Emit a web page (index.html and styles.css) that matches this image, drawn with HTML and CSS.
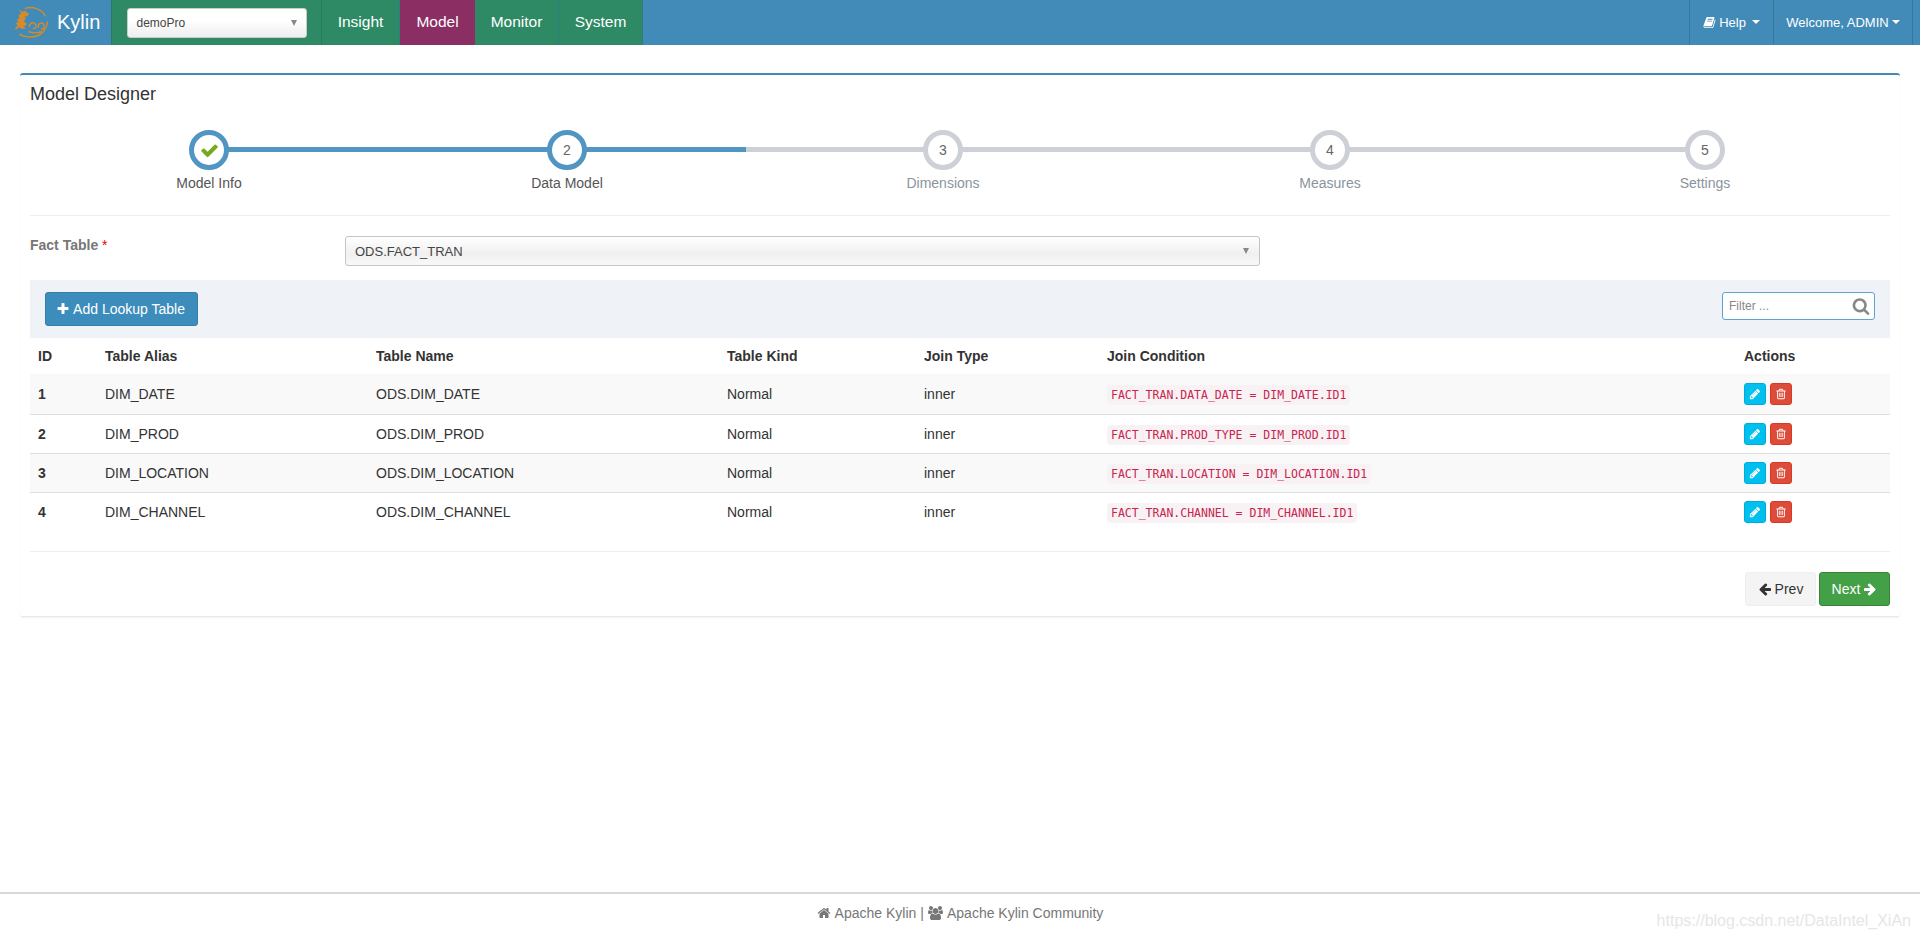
FILE: index.html
```html
<!DOCTYPE html>
<html lang="en">
<head>
<meta charset="utf-8">
<title>Kylin - Model Designer</title>
<link rel="stylesheet" href="styles.css">
</head>
<body>
<svg class="defs" aria-hidden="true">
  <symbol id="i-edit" viewBox="0 0 1792 1792"><path d="M491 1536l91-91-235-235-91 91v107h128v128h107zm523-928q0-22-22-22-10 0-17 7l-542 542q-7 7-7 17 0 22 22 22 10 0 17-7l542-542q7-7 7-17zm-54-192l416 416-832 832h-416v-416zm683 96q0 53-37 90l-166 166-416-416 166-165q36-38 90-38 53 0 91 38l235 234q37 39 37 91z"/></symbol>
  <symbol id="i-del" viewBox="0 0 1792 1792"><path d="M704 736v576q0 14-9 23t-23 9h-64q-14 0-23-9t-9-23v-576q0-14 9-23t23-9h64q14 0 23 9t9 23zm256 0v576q0 14-9 23t-23 9h-64q-14 0-23-9t-9-23v-576q0-14 9-23t23-9h64q14 0 23 9t9 23zm256 0v576q0 14-9 23t-23 9h-64q-14 0-23-9t-9-23v-576q0-14 9-23t23-9h64q14 0 23 9t9 23zm128 724v-948h-896v948q0 22 7 40.500t14.500 27 10.500 8.500h832q3 0 10.500-8.500t14.500-27 7-40.500zm-672-1076h448l-48-117q-7-9-17-11h-317q-10 2-17 11zm928 32v64q0 14-9 23t-23 9h-96v948q0 83-47 143.500t-113 60.500h-832q-66 0-113-58.500t-47-141.500v-952h-96q-14 0-23-9t-9-23v-64q0-14 9-23t23-9h309l70-167q15-37 54-63t79-26h320q40 0 79 26t54 63l70 167h309q14 0 23 9t9 23z"/></symbol>
</svg>
<div class="page">
  <header class="topbar">
    <a class="brand">
      <svg class="logo" viewBox="0 0 40 36">
        <path class="logo-arc" d="M12 2.500C20 -0.500 31 3 35 11M37 17C37 28 27 35 15 34C11 33.700 9 33 6 31"/>
        <path class="logo-body" d="M6 4l3 2 4-1 1 2 3 1-2 3-3 0 1 3-2 3 3 2 0 2-3 1 2 3-5 0-2-2-4 3-1-1 3-4-2-2 3-2-2-2 3-2-1-3 3-2-2-3z"/>
        <path class="logo-arc" d="M17 23c0-5 5-6 7-3s-1 6-3 4M27 24c-1-5 4-7 6-4s0 6-3 5M16 28c5 2 10 2 15 0"/>
      </svg>
      <span class="brand-name">Kylin</span>
    </a>
    <div class="project-cell">
      <div class="project-select"><span>demoPro</span><i class="caret-gray"></i></div>
    </div>
    <nav class="nav-main">
      <a class="nav-item nav-insight">Insight</a>
      <a class="nav-item nav-model">Model</a>
      <a class="nav-item nav-monitor">Monitor</a>
      <a class="nav-item nav-system">System</a>
    </nav>
    <div class="nav-right">
      <a class="nav-r nav-help">
        <svg class="ico ico-book" viewBox="0 0 1792 1792"><path d="M1703 478q40 57 18 129l-275 906q-19 64-76.500 107.500t-122.500 43.500h-923q-77 0-148.500-53.500t-99.500-131.500q-24-67-2-127 0-4 3-27t4-37q1-8-3-21.500t-3-19.500q2-11 8-21t16.500-23.500 16.500-23.500q23-38 45-91.500t30-91.500q3-10 .5-30t-.5-28q3-11 17-28t17-23q21-36 42-92t25-90q1-9-2.500-32t.5-28q4-13 22-30.500t22-22.500q19-26 42.500-84.500t27.500-96.500q1-8-3-25.500t-2-26.500q2-8 9-18t18-23 17-21q8-12 16.500-30.500t15-35 16-36 19.500-32 26.500-23.500 36-11.500 47.500 5.500l-1 3q38-9 51-9h761q74 0 114 56t18 130l-274 906q-36 119-71.500 153.500t-128.500 34.500h-869q-27 0-38 15-11 16-1 43 24 70 144 70h923q29 0 56-15.500t35-41.500l300-987q7-22 5-57 38 15 59 43zm-1064 2q-4 13 2 22.500t20 9.500h608q13 0 25.500-9.500t16.500-22.500l21-64q4-13-2-22.500t-20-9.500h-608q-13 0-25.500 9.500t-16.500 22.500zm-83 256q-4 13 2 22.500t20 9.500h608q13 0 25.500-9.500t16.500-22.500l21-64q4-13-2-22.500t-20-9.500h-608q-13 0-25.500 9.500t-16.500 22.500z"/></svg>
        Help<i class="caret-white"></i>
      </a>
      <a class="nav-r nav-user">Welcome, ADMIN<i class="caret-white"></i></a>
    </div>
  </header>

  <main class="main">
    <section class="box">
      <h1 class="box-title">Model Designer</h1>
      <ol class="wizard">
        <li class="step step-1 done">
          <span class="bubble"><svg class="ico-check" viewBox="0 0 1792 1792"><path d="M1671 566q0 40-28 68l-724 724-136 136q-28 28-68 28t-68-28l-136-136-362-362q-28-28-28-68t28-68l136-136q28-28 68-28t68 28l294 295 656-657q28-28 68-28t68 28l136 136q28 28 28 68z"/></svg></span>
          <span class="step-label">Model Info</span>
        </li>
        <li class="step step-2 done">
          <span class="bubble">2</span>
          <span class="step-label">Data Model</span>
        </li>
        <li class="step step-3">
          <span class="bubble">3</span>
          <span class="step-label">Dimensions</span>
        </li>
        <li class="step step-4">
          <span class="bubble">4</span>
          <span class="step-label">Measures</span>
        </li>
        <li class="step step-5">
          <span class="bubble">5</span>
          <span class="step-label">Settings</span>
        </li>
      </ol>

      <div class="fact-row">
        <label class="fact-label">Fact Table <span class="req">*</span></label>
        <div class="fact-select"><span>ODS.FACT_TRAN</span><i class="caret-gray"></i></div>
      </div>

      <div class="toolbar">
        <button class="btn-add" type="button">
          <svg class="ico ico-plus" viewBox="0 0 1792 1792"><path d="M1600 736v192q0 40-28 68t-68 28h-416v416q0 40-28 68t-68 28h-192q-40 0-68-28t-28-68v-416h-416q-40 0-68-28t-28-68v-192q0-40 28-68t68-28h416v-416q0-40 28-68t68-28h192q40 0 68 28t28 68v416h416q40 0 68 28t28 68z"/></svg>
          Add Lookup Table
        </button>
        <div class="filter">
          <span class="filter-text">Filter ...</span>
          <svg class="ico-search" viewBox="0 0 1792 1792"><path d="M1216 832q0-185-131.500-316.500t-316.500-131.500-316.500 131.500-131.500 316.500 131.500 316.500 316.500 131.500 316.500-131.500 131.500-316.500zm512 832q0 52-38 90t-90 38q-54 0-90-38l-343-342q-179 124-399 124-143 0-273.500-55.500t-225-150-150-225-55.500-273.500 55.500-273.500 150-225 225-150 273.500-55.500 273.500 55.500 225 150 150 225 55.500 273.500q0 220-124 399l343 343q37 37 37 90z"/></svg>
        </div>
      </div>

      <table class="lookup">
        <colgroup>
          <col class="c-id"><col class="c-alias"><col class="c-name"><col class="c-kind"><col class="c-type"><col class="c-cond"><col class="c-act">
        </colgroup>
        <thead>
          <tr><th>ID</th><th>Table Alias</th><th>Table Name</th><th>Table Kind</th><th>Join Type</th><th>Join Condition</th><th>Actions</th></tr>
        </thead>
        <tbody>
          <tr>
            <td class="num">1</td><td>DIM_DATE</td><td>ODS.DIM_DATE</td><td>Normal</td><td>inner</td>
            <td><code>FACT_TRAN.DATA_DATE = DIM_DATE.ID1</code></td>
            <td><div class="acts">
              <button class="act act-edit" type="button"><svg><use href="#i-edit"/></svg></button>
              <button class="act act-del" type="button"><svg><use href="#i-del"/></svg></button>
            </div></td>
          </tr>
          <tr>
            <td class="num">2</td><td>DIM_PROD</td><td>ODS.DIM_PROD</td><td>Normal</td><td>inner</td>
            <td><code>FACT_TRAN.PROD_TYPE = DIM_PROD.ID1</code></td>
            <td><div class="acts">
              <button class="act act-edit" type="button"><svg><use href="#i-edit"/></svg></button>
              <button class="act act-del" type="button"><svg><use href="#i-del"/></svg></button>
            </div></td>
          </tr>
          <tr>
            <td class="num">3</td><td>DIM_LOCATION</td><td>ODS.DIM_LOCATION</td><td>Normal</td><td>inner</td>
            <td><code>FACT_TRAN.LOCATION = DIM_LOCATION.ID1</code></td>
            <td><div class="acts">
              <button class="act act-edit" type="button"><svg><use href="#i-edit"/></svg></button>
              <button class="act act-del" type="button"><svg><use href="#i-del"/></svg></button>
            </div></td>
          </tr>
          <tr>
            <td class="num">4</td><td>DIM_CHANNEL</td><td>ODS.DIM_CHANNEL</td><td>Normal</td><td>inner</td>
            <td><code>FACT_TRAN.CHANNEL = DIM_CHANNEL.ID1</code></td>
            <td><div class="acts">
              <button class="act act-edit" type="button"><svg><use href="#i-edit"/></svg></button>
              <button class="act act-del" type="button"><svg><use href="#i-del"/></svg></button>
            </div></td>
          </tr>
        </tbody>
      </table>

      <div class="pager">
        <button class="btn-prev" type="button">
          <svg class="ico" viewBox="0 0 1792 1792"><path d="M1664 896v128q0 53-32.500 90.500t-84.500 37.500h-704l293 294q38 36 38 90t-38 90l-75 76q-37 37-90 37-52 0-91-37l-651-652q-37-37-37-90 0-52 37-91l651-650q38-38 91-38 52 0 90 38l75 74q38 38 38 91t-38 91l-293 293h704q52 0 84.500 37.500t32.500 90.500z"/></svg>
          Prev
        </button>
        <button class="btn-next" type="button">
          Next
          <svg class="ico" viewBox="0 0 1792 1792"><path d="M1600 960q0 54-37 91l-651 651q-39 37-91 37-51 0-90-37l-75-75q-38-38-38-91t38-91l293-293h-704q-52 0-84.500-37.500t-32.500-90.500v-128q0-53 32.500-90.500t84.500-37.500h704l-293-294q-38-36-38-90t38-90l75-75q38-38 90-38 53 0 91 38l651 651q37 35 37 90z"/></svg>
        </button>
      </div>
    </section>
  </main>

  <footer class="footer">
    <svg class="ico ico-home" viewBox="0 0 1792 1792"><path d="M1472 992v480q0 26-19 45t-45 19h-384v-384h-256v384h-384q-26 0-45-19t-19-45v-480q0-1 .5-3t.5-3l575-474 575 474q1 2 1 6zm223-69l-62 74q-8 9-21 11h-3q-13 0-21-7l-692-577-692 577q-12 8-24 7-13-2-21-11l-62-74q-8-10-7-23.500t11-21.500l719-599q32-26 76-26t76 26l244 204v-195q0-14 9-23t23-9h192q14 0 23 9t9 23v408l219 182q10 8 11 21.500t-7 23.500z"/></svg>
    <span>Apache Kylin</span>
    <span class="sep">|</span>
    <svg class="ico ico-users" viewBox="-64 0 1920 1792"><path d="M529 896q-162 5-265 128h-134q-82 0-138-40.500t-56-118.500q0-353 124-353 6 0 43.500 21t97.500 42.500 119 21.500q67 0 133-23-5 37-5 66 0 139 81 256zm1071 637q0 120-73 189.500t-194 69.500h-874q-121 0-194-69.500t-73-189.500q0-53 3.500-103.500t14-109 26.500-108.500 43-97.500 62-81 85.500-53.500 111.500-20q10 0 43 21.500t73 48 107 48 135 21.500 135-21.500 107-48 73-48 43-21.500q61 0 111.500 20t85.500 53.500 62 81 43 97.500 26.500 108.500 14 109 3.500 103.500zm-1024-1277q0 106-75 181t-181 75-181-75-75-181 75-181 181-75 181 75 75 181zm704 384q0 159-112.500 271.500t-271.500 112.500-271.500-112.500-112.500-271.500 112.500-271.500 271.500-112.500 271.500 112.500 112.500 271.500zm576 225q0 78-56 118.500t-138 40.500h-134q-103-123-265-128 81-117 81-256 0-29-5-66 66 23 133 23 59 0 119-21.500t97.500-42.500 43.500-21q124 0 124 353zm-128-609q0 106-75 181t-181 75-181-75-75-181 75-181 181-75 181 75 75 181z"/></svg>
    <span>Apache Kylin Community</span>
    <span class="watermark">https://blog.csdn.net/DataIntel_XiAn</span>
  </footer>
</div>
</body>
</html>
```

FILE: styles.css
```css
* { box-sizing: border-box; }
html, body { margin: 0; padding: 0; background: #fff; }
body { font-family: "Liberation Sans", Arial, sans-serif; font-size: 14px; color: #333; }
a { color: inherit; text-decoration: none; }
.defs { display: none; }

.page { height: 937px; display: flex; flex-direction: column; overflow: hidden; }

/* Top bar */
.topbar { height: 45px; flex: none; display: flex; background: #428bb8; color: #fff; }
.brand { width: 111px; display: flex; align-items: center; padding-left: 14px; gap: 7px; }
.logo { width: 36px; height: 33px; flex: none; }
.logo-arc { fill: none; stroke: #d58a2c; stroke-width: 1.600; }
.logo-body { fill: #d58a2c; }
.brand-name { font-size: 20px; }
.project-cell { width: 211px; display: flex; align-items: center; justify-content: center; background: #2e8a65; border-left: 1px solid #2a7a5c; border-right: 1px solid #2a7a5c; }
.project-select { width: 180px; height: 30px; display: flex; align-items: center; justify-content: space-between; padding: 0 9px 0 9px; background: linear-gradient(#fff 40%, #eee); border: 1px solid #ccc; border-radius: 3px; color: #444; font-size: 12px; }
.caret-gray { width: 0; height: 0; border-left: 3.500px solid transparent; border-right: 3.500px solid transparent; border-top: 6px solid #888; }
.nav-main { display: flex; }
.nav-item { display: flex; align-items: center; justify-content: center; padding-bottom: 1px; font-size: 15.500px; color: #fff; background: #2e8a65; border-right: 1px solid #2f7c7e; }
.nav-insight { width: 78px; }
.nav-model { width: 75px; background: #8a2e63; border-right: 0; }
.nav-monitor { width: 84px; }
.nav-system { width: 84px; }
.nav-right { margin-left: auto; display: flex; margin-right: 7px; }
.nav-r { display: flex; align-items: center; justify-content: center; padding-bottom: 1px; font-size: 13px; color: #fff; border-left: 1px solid #3a7698; }
.nav-help { width: 84px; gap: 3px; }
.nav-user { width: 140px; border-right: 1px solid #3a7698; }
.ico { width: 1em; height: 1em; fill: currentColor; flex: none; }
.ico-book { width: 13px; height: 13px; }
.caret-white { width: 0; height: 0; margin-left: 3px; border-left: 4px solid transparent; border-right: 4px solid transparent; border-top: 4px solid #fff; }

/* Main box */
.main { padding: 28px 20px 0; flex: none; }
.box { border-top: 2px solid #428bb8; border-bottom: 1px solid #e8e8e8; box-shadow: 0 1px 2px rgba(0,0,0,.05); border-radius: 3px; padding: 0 10px 10px; height: 544px; }
.box-title { margin: 0; padding-top: 9px; font-size: 18px; font-weight: 400; line-height: 20px; color: #333; }

/* Wizard */
.wizard { list-style: none; margin: 0; padding: 0; height: 86px; margin-top: 26px; display: grid; grid-template-columns: 358px 358px 394px 380px 370px; border-bottom: 1px solid #eceef0; }
.step { position: relative; display: flex; flex-direction: column; align-items: center; color: #8a949c; }
.step::before, .step::after { content: ""; position: absolute; top: 17px; height: 5px; width: 50%; background: #cdd0d6; }
.step::before { left: 0; }
.step::after { right: 0; }
.step.done::before, .step.done::after { background: #5195c3; }
.step-1::before, .step-5::after { display: none; }
.bubble { position: relative; z-index: 1; width: 40px; height: 40px; border-radius: 50%; background: #fff; border: 5px solid #cdd0d6; display: flex; align-items: center; justify-content: center; font-size: 14px; color: #666; }
.done .bubble { border-color: #5195c3; }
.ico-check { width: 19px; height: 19px; fill: #76a91d; }
.step-label { margin-top: 3px; font-size: 14px; line-height: 20px; }
.done .step-label { color: #555; }

/* Fact row */
.fact-row { display: flex; height: 64px; padding-top: 20px; }
.fact-label { width: 315px; font-weight: 700; font-size: 14px; color: #777; line-height: 20px; margin-top: -1px; }
.req { color: #e00; font-weight: 400; }
.fact-select { width: 915px; height: 30px; display: flex; align-items: center; justify-content: space-between; padding: 0 10px 0 9px; background: linear-gradient(#fff, #f0f0f0 60%, #f8f8f8); border: 1px solid #c4c4c4; border-radius: 3px; font-size: 13px; color: #444; }

/* Toolbar */
.toolbar { height: 58px; background: #eff3f8; display: flex; align-items: flex-start; justify-content: space-between; padding: 12px 15px 0 15px; }
.btn-add { height: 34px; width: 153px; padding: 0 2px 0 0; display: flex; align-items: center; justify-content: center; gap: 3px; background: #3c8dbc; border: 1px solid #367fa9; border-radius: 3px; color: #fff; font: 14px "Liberation Sans", Arial, sans-serif; }
.ico-plus { width: 14px; height: 14px; }
.filter { width: 153px; height: 28px; background: #fff; border: 1px solid #5ba4d4; border-radius: 3px; display: flex; align-items: center; justify-content: space-between; padding: 0 4px 0 6px; }
.filter-text { font-size: 12px; color: #888; }
.ico-search { width: 18px; height: 18px; fill: #888; }

/* Table */
.lookup { width: 1860px; border-collapse: collapse; table-layout: fixed; }
.c-id { width: 67px; } .c-alias { width: 271px; } .c-name { width: 351px; } .c-kind { width: 197px; }
.c-type { width: 183px; } .c-cond { width: 637px; } .c-act { width: 154px; }
.lookup th { height: 36px; padding: 0 8px; text-align: left; font-weight: 700; font-size: 14px; color: #333; }
.lookup td { height: 39px; padding: 0 8px; font-size: 14px; color: #333; border-bottom: 1px solid #ddd; }
.lookup tbody tr:nth-child(odd) td { background: #f9f9f9; }
.lookup tbody tr:first-child td { height: 40px; border-top: 0; }
.lookup tbody tr:last-child td { border-bottom: 0; background: #fff; }
.lookup .num { font-weight: 700; }
code { font-family: "DejaVu Sans Mono", "Liberation Mono", monospace; font-size: 11.500px; color: #c7254e; background: #f9f2f4; padding: 3px 4px; border-radius: 4px; }
.acts { display: flex; gap: 4px; }
.act { width: 22px; height: 22px; padding: 0; display: flex; align-items: center; justify-content: center; border-radius: 3px; color: #fff; }
.act svg { width: 12px; height: 12px; fill: #fff; }
.act-edit { background: #00c0ef; border: 1px solid #00acd6; }
.act-del { background: #dd4b39; border: 1px solid #d73925; }

/* Pager */
.pager { margin-top: 20px; border-top: 1px solid #eceef0; padding-top: 20px; display: flex; justify-content: flex-end; gap: 3px; }
.btn-prev, .btn-next { height: 34px; padding: 0; display: flex; align-items: center; justify-content: center; gap: 3px; border-radius: 3px; font: 14px "Liberation Sans", Arial, sans-serif; }
.btn-prev { width: 71px; background: #f4f4f4; border: 1px solid #eee; color: #333; }
.btn-next { width: 71px; background: #43a047; border: 1px solid #398439; color: #fff; }

/* Footer */
.footer { position: relative; margin-top: auto; height: 45px; flex: none; border-top: 2px solid #d9d9d9; display: flex; align-items: flex-start; justify-content: center; gap: 4px; padding-top: 9px; font-size: 14px; line-height: 20px; color: #777; }
.ico-home, .ico-users { width: 14px; height: 14px; margin-top: 3px; }
.ico-users { width: 15px; }
.watermark { position: absolute; right: 9px; top: 17px; font-size: 16px; color: #e6e6e6; }
```
